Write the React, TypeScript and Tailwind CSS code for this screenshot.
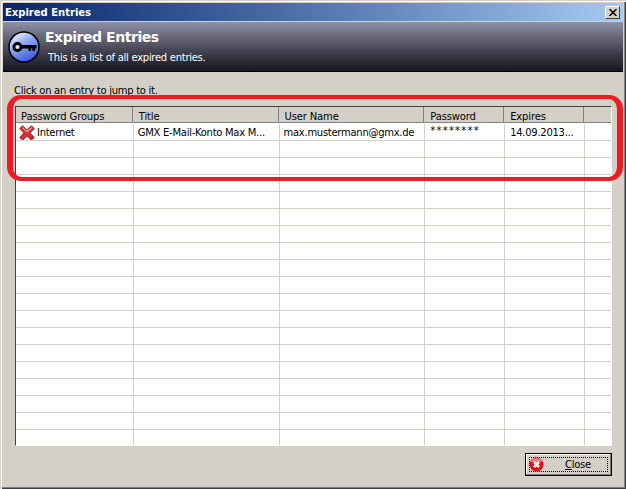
const columns = [118, 146, 146, 80, 80, 26];
const headerColumns = [117, 146, 146, 80, 80, 27];
const emptyRows = Array.from({ length: 18 });

function KeyIcon() {
  return (
    <svg width="32" height="32" viewBox="0 0 32 32">
      <defs>
        <linearGradient id="keyBg" x1="0.2" y1="0" x2="0.8" y2="1">
          <stop offset="0" stopColor="#f4f6fc" />
          <stop offset="0.4" stopColor="#8ea8ee" />
          <stop offset="1" stopColor="#2b4cdc" />
        </linearGradient>
      </defs>
      <circle cx="16" cy="16" r="15" fill="url(#keyBg)" stroke="#000" strokeWidth="1.5" />
      <circle cx="9.5" cy="16" r="3.6" fill="#dfe6fa" stroke="#000" strokeWidth="3" />
      <path d="M13 14h15.5v3.5h-1.5v2.5h-2.5v-2.5h-1.5v2.5h-2.5v-2.5H13z" fill="#000" />
    </svg>
  );
}

function CrossIcon() {
  return (
    <svg width="16" height="16" viewBox="0 0 16 16">
      <path d="M0.7 3.6 3.6 0.7 8 4.7 12.4 0.7 15.3 3.6 11.3 8 15.3 12.4 12.4 15.3 8 11.3 3.6 15.3 0.7 12.4 4.7 8z" fill="#dc2a30" stroke="#6d3436" strokeWidth="0.8" strokeLinejoin="round" />
      <path d="M3.2 2.6 8 6.6 12.8 2.6" fill="none" stroke="#f6b0b0" strokeWidth="1.2" />
    </svg>
  );
}

function CloseIcon() {
  return (
    <svg width="15" height="15" viewBox="0 0 15 15">
      <circle cx="7.5" cy="7.5" r="7" fill="#e4101c" />
      <path d="M1.5 5a6.5 6.5 0 0 1 12 0z" fill="#f4939a" opacity="0.8" />
      <path d="M5 5l5 5M10 5l-5 5" stroke="#fff" strokeWidth="2.6" />
    </svg>
  );
}

function Row({ cells }: { cells?: string[] }) {
  return (
    <div className="flex h-[17px] border-b border-[#d4d0c8]">
      {columns.map((w, i) => (
        <div
          key={i}
          style={{ width: w }}
          className="flex items-center border-r border-[#d4d0c8] last:border-r-0 pl-[4px] pt-px whitespace-nowrap overflow-hidden"
        >
          {cells && i === 0 && <span className="mr-[2px] -ml-[1px] shrink-0"><CrossIcon /></span>}
          {cells && i === 3 && <span className="ml-px -mt-[4px] tracking-[1.2px]">{cells[i]}</span>}
          {cells && i === 4 && <span className="ml-px">{cells[i]}</span>}
          {cells && i !== 3 && i !== 4 && <span>{cells[i]}</span>}
        </div>
      ))}
    </div>
  );
}

export default function App() {
  return (
    <div className="relative w-[626px] h-[489px] p-[3px] bg-[#d4d0c8] overflow-hidden text-[10px] tracking-[-0.28px] text-black font-['DejaVu_Sans',sans-serif] shadow-[inset_1px_1px_0_#d4d0c8,inset_2px_2px_0_#ffffff,inset_-1px_-1px_0_#404040,inset_-2px_-2px_0_#808080]">
      {/* Title bar */}
      <div className="h-[18px] flex items-center justify-between pl-[2px] pr-[3px] bg-gradient-to-r from-[#0a246a] to-[#a6caf0]">
        <span className="font-bold text-white tracking-normal">Expired Entries</span>
        <button className="w-[15px] h-[13px] flex items-center justify-center bg-[#d4d0c8] border border-t-white border-l-white border-r-[#404040] border-b-[#404040]">
          <svg width="8" height="7" viewBox="0 0 8 7">
            <path d="M0.5 0 7.5 7M7.5 0 0.5 7" stroke="#000" strokeWidth="1.5" />
          </svg>
        </button>
      </div>

      {/* Banner */}
      <div className="mt-px h-[50px] flex items-center pl-[5px] border-b border-black bg-gradient-to-b from-[#9090a6] to-[#161620]">
        <KeyIcon />
        <div className="ml-[5px] -mt-[2px] text-white">
          <div className="font-bold text-[14px] tracking-[-0.45px] leading-[18px]">Expired Entries</div>
          <div className="ml-[3px] mt-[5px] leading-[13px]">This is a list of all expired entries.</div>
        </div>
      </div>

      <p className="ml-[11px] mt-[12px] leading-[13px]">Click on an entry to jump to it.</p>

      {/* List */}
      <div className="ml-[12px] mt-[9px] w-[597px] h-[340px] bg-white border-t border-l border-[#404040] border-r border-r-white border-b border-b-white overflow-hidden">
        <div className="flex h-[16px] bg-[#d4d0c8] border-b border-[#808080]">
          {['Password Groups', 'Title', 'User Name', 'Password', 'Expires', ''].map((h, i) => (
            <div
              key={i}
              style={{ width: headerColumns[i] }}
              className="flex items-center pl-[5px] pt-[3px] border-r border-[#808080] last:border-r-0 whitespace-nowrap tracking-[-0.15px]"
            >
              <span className={i > 0 ? 'ml-px' : ''}>{h}</span>
            </div>
          ))}
        </div>
        <div className="h-px" />
        <Row cells={['Internet', 'GMX E-Mail-Konto Max M...', 'max.mustermann@gmx.de', '********', '14.09.2013...', '']} />
        {emptyRows.map((_, i) => (
          <Row key={i} />
        ))}
      </div>

      {/* Footer */}
      <div className="flex justify-end mt-[7px] mr-[11px]">
        <button className="relative w-[87px] h-[23px] border border-black bg-[#d4d0c8] shadow-[inset_-1px_-1px_0_#808080,inset_1px_1px_0_#fff]">
          <div className="absolute inset-[3px] border border-dotted border-black" />
          <span className="absolute left-[3px] top-[3px]"><CloseIcon /></span>
          <span className="absolute left-[39px] top-[3px]"><span className="underline">C</span>lose</span>
        </button>
      </div>

      {/* Red highlight drawn over the screenshot */}
      <div className="absolute left-[7px] top-[95px] w-[616px] h-[86px] rounded-[14px] border-x-[6px] border-y-[4px] border-[#ed1c24] pointer-events-none" />
    </div>
  );
}
